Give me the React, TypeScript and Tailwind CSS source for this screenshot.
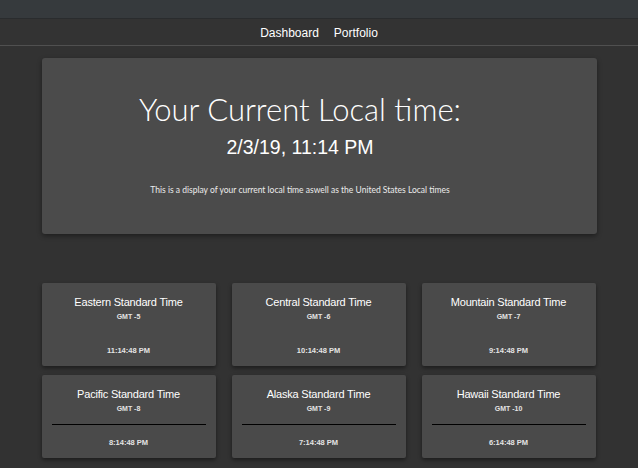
const zones = [
  { name: "Eastern Standard Time", gmt: "GMT -5", time: "11:14:48 PM" },
  { name: "Central Standard Time", gmt: "GMT -6", time: "10:14:48 PM" },
  { name: "Mountain Standard Time", gmt: "GMT -7", time: "9:14:48 PM" },
  { name: "Pacific Standard Time", gmt: "GMT -8", time: "8:14:48 PM" },
  { name: "Alaska Standard Time", gmt: "GMT -9", time: "7:14:48 PM" },
  { name: "Hawaii Standard Time", gmt: "GMT -10", time: "6:14:48 PM" },
]

function ZoneCard({ zone, ruled }: { zone: (typeof zones)[number]; ruled: boolean }) {
  return (
    <div className="flex h-[83px] flex-col items-center rounded-[2px] bg-[#4a4a4a] px-[10px] pt-[12px] text-white shadow-[0_2px_4px_rgba(0,0,0,0.45)]">
      <h3 className="text-[11px] leading-[14px] tracking-[-0.2px]">{zone.name}</h3>
      <p className="mt-[3px] text-[7px] font-bold leading-[9px] text-[#e4e4e4]">{zone.gmt}</p>
      <div className={`mt-[11px] w-full border-t ${ruled ? "border-black" : "border-transparent"}`} />
      <p className="mt-[13px] text-[7.5px] font-bold leading-[10px] text-[#e4e4e4]">{zone.time}</p>
    </div>
  )
}

export default function App() {
  return (
    <div
      className="min-h-[468px] bg-[#323232] text-white"
      style={{ fontFamily: '"Liberation Sans", Arial, sans-serif' }}
    >
      <div className="h-[19px] border-b border-[#2a2c2e] bg-[#363a3d]" />
      <nav className="flex h-[27px] items-center justify-center gap-[15px] border-b border-[#505050] bg-[#333333] pt-[2px] text-[12px] text-white">
        <a>Dashboard</a>
        <a>Portfolio</a>
      </nav>

      <main className="mx-auto w-[555px] pt-[12px]">
        <section className="flex h-[176px] flex-col items-center rounded-[3px] bg-[#4b4b4b] pr-[38px] pt-[32px] shadow-[0_2px_5px_rgba(0,0,0,0.4)]">
          <h1
            className="text-[31px] font-light leading-[38px]"
            style={{ fontFamily: "Lato, 'Open Sans', sans-serif" }}
          >
            Your Current Local time:
          </h1>
          <p className="mt-[7px] text-[19.5px] leading-[24px]">2/3/19, 11:14 PM</p>
          <p
            className="mt-[25px] text-[8.5px] leading-[12px] text-[#ececec]"
            style={{ fontFamily: "Lato, sans-serif" }}
          >
            This is a display of your current local time aswell as the United States Local times
          </p>
        </section>

        <div className="mt-[49px] grid grid-cols-[174px_174px_174px] gap-x-[16px] gap-y-[9px]">
          {zones.map((zone, i) => (
            <ZoneCard key={zone.name} zone={zone} ruled={i >= 3} />
          ))}
        </div>
      </main>
    </div>
  )
}
